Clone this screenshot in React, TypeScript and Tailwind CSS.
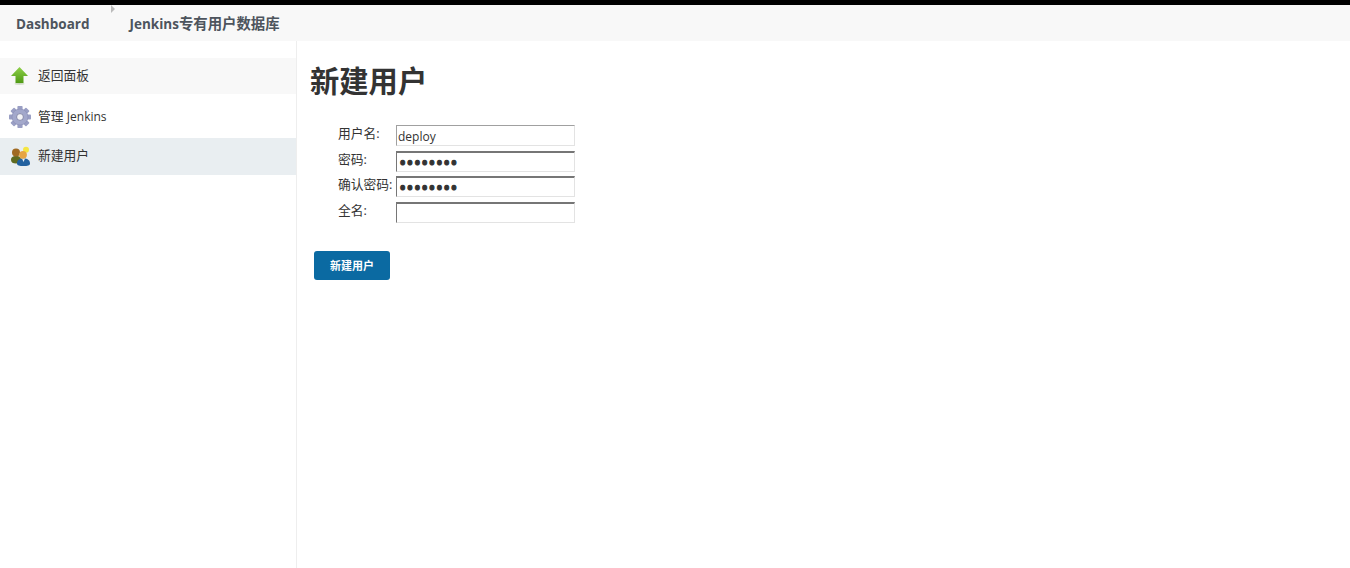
import React from "react";

const fontStack = { fontFamily: '"Open Sans", "Noto Sans CJK SC", sans-serif' };

function UpIcon() {
  return (
    <svg width="24" height="24" viewBox="0 0 24 24">
      <defs>
        <linearGradient id="up" x1="0" y1="0" x2="0" y2="1">
          <stop offset="0" stopColor="#8fd14a" />
          <stop offset="1" stopColor="#4f9a14" />
        </linearGradient>
      </defs>
      <path d="M11.5 3 L20 12 L15.5 12 L15.5 19 L7.5 19 L7.5 12 L3 12 Z" fill="url(#up)" />
      <ellipse cx="11.5" cy="19.8" rx="5" ry="0.9" fill="#c9d6bd" />
    </svg>
  );
}

function GearIcon() {
  const teeth = [0, 45, 90, 135, 180, 225, 270, 315];
  return (
    <svg width="24" height="24" viewBox="0 0 24 24">
      <g fill="#9a9fc4">
        {teeth.map((a) => (
          <rect key={a} x="9.4" y="1" width="5.2" height="5" rx="0.8" transform={`rotate(${a} 12 12)`} />
        ))}
      </g>
      <circle cx="12" cy="12" r="8" fill="#a3a8cb" />
      <circle cx="12" cy="12" r="8" fill="none" stroke="#8488b0" strokeWidth="0.5" />
      <circle cx="12" cy="12" r="3.4" fill="#f4f4f6" stroke="#74779c" strokeWidth="0.8" />
    </svg>
  );
}

function UsersIcon() {
  return (
    <svg width="24" height="24" viewBox="0 0 24 24">
      <path d="M3 16 C3 13 5 12 8 12 C12 12 13 14 13 16 C13 18.5 11 19.5 8 19.5 C5 19.5 3 18.5 3 16 Z" fill="#5f6b20" />
      <circle cx="8" cy="8.5" r="4" fill="#a06a22" />
      <circle cx="18" cy="5.8" r="3" fill="#f5e642" />
      <path d="M9 19.5 C9 16 11 14.5 15.5 14.5 C20 14.5 22 16.5 22 19.5 C22 21.5 19.5 22 15.5 22 C11.5 22 9 21.5 9 19.5 Z" fill="#22619f" />
      <path d="M14 14.5 L15.5 18 L17 14.5 Z" fill="#e8edf2" />
      <circle cx="15" cy="10.8" r="3.9" fill="#e6a544" />
    </svg>
  );
}

const rows = [
  { label: "用户名:", type: "text", value: "deploy", light: true },
  { label: "密码:", type: "password", value: "password" },
  { label: "确认密码:", type: "password", value: "password" },
  { label: "全名:", type: "text", value: "" },
];

export default function App() {
  return (
    <div className="flex h-[568px] flex-col overflow-hidden bg-white text-[#333333]" style={fontStack}>
      <div className="h-[5px] bg-black" />
      <div className="relative flex h-[36px] items-center bg-[#f8f8f8] pl-[16px] pt-[2px] text-[13.5px] font-bold text-[#4d545d]">
        <span>Dashboard</span>
        <span className="absolute left-[111px] top-0 h-0 w-0 border-y-[4px] border-l-[4px] border-y-transparent border-l-[#bbbbbb]" />
        <span className="ml-[40px]">
          Jenkins<span className="text-[14.4px]">专有用户数据库</span>
        </span>
      </div>

      <div className="flex flex-1">
        <div className="w-[297px] border-r border-[#eeeeee] pt-[17px] text-[12.75px]">
          <div className="flex h-[36px] items-center gap-[6px] bg-[#f8f8f8] pl-[8px]">
            <UpIcon />
            <span>返回面板</span>
          </div>
          <div className="flex h-[44px] items-center gap-[6px] pl-[8px] pt-[2px]">
            <GearIcon />
            <span>
              管理 <span className="text-[12px]">Jenkins</span>
            </span>
          </div>
          <div className="flex h-[37px] items-center gap-[6px] bg-[#e9eef1] pb-[1px] pl-[8px]">
            <UsersIcon />
            <span>新建用户</span>
          </div>
        </div>

        <div className="flex-1 pl-[13px] pt-[20px]">
          <h1 className="text-[29.3px] font-bold leading-[40px] text-[#333333]">新建用户</h1>

          <div className="ml-[28px] mt-[24px] flex w-[237px] flex-col gap-[3.67px] text-[12.75px]">
            {rows.map((r) => (
              <div key={r.label} className="flex h-[22px] items-start">
                <span className="-mt-[1px] w-[58px] whitespace-nowrap leading-[18px]">{r.label}</span>
                <input
                  readOnly
                  type={r.type}
                  value={r.value}
                  className={
                    "h-[21px] w-[179px] border border-[#e3e3e3] bg-white text-[#333333] outline-none " +
                    (r.type === "password"
                      ? "pl-[2px] pt-[1px] text-[19.5px] [-webkit-text-stroke:1px_#333333] "
                      : "pl-[1px] pt-[1px] text-[12px] ") +
                    (r.light ? "border-t-[#a0a0a0] border-l-[#a0a0a0]" : "border-t-2 border-t-[#767676] border-l-[#767676]")
                  }
                />
              </div>
            ))}
          </div>

          <button className="ml-[4px] mt-[27px] h-[29px] w-[76px] rounded-[3px] bg-[#0b6aa2] pt-[2px] text-[11px] font-bold text-white">
            新建用户
          </button>
        </div>
      </div>
    </div>
  );
}
